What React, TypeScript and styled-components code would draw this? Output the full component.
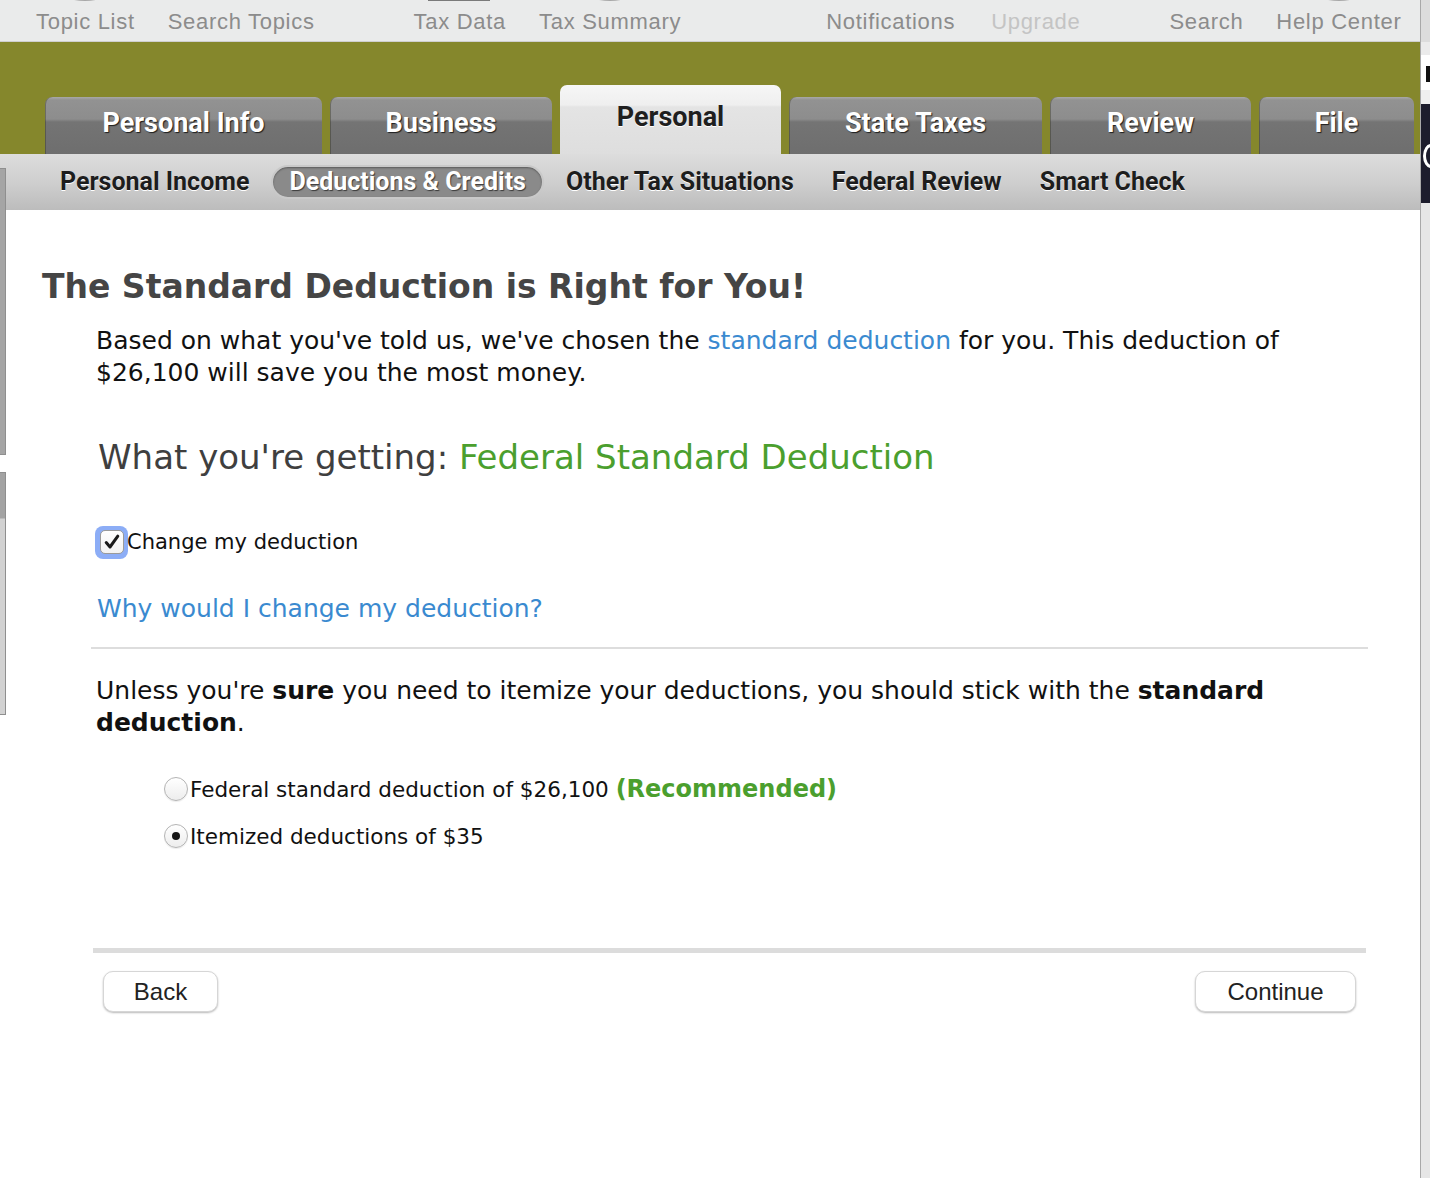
import React from 'react';
import styled, { createGlobalStyle } from 'styled-components';

const GlobalStyle = createGlobalStyle`
	html, body {
		margin: 0;
		padding: 0;
		background: #ffffff;
		overflow: hidden;
	}
	body {
		font-family: 'DejaVu Sans', 'Noto Sans', sans-serif;
		color: #111111;
	}
`;

const topGroups = [
	{ offset: 36, gap: 33, items: [{ label: 'Topic List', arc: true }, { label: 'Search Topics' }] },
	{ offset: 99, gap: 33, items: [{ label: 'Tax Data', marker: true }, { label: 'Tax Summary', arc: true }] },
	{ offset: 145, gap: 36, items: [{ label: 'Notifications' }, { label: 'Upgrade', muted: true }] },
	{ offset: 89, gap: 33, items: [{ label: 'Search' }, { label: 'Help Center', arc: true }] },
];

const mainTabs = [
	{ label: 'Personal Info', width: 277 },
	{ label: 'Business', width: 222 },
	{ label: 'Personal', width: 221, active: true },
	{ label: 'State Taxes', width: 253 },
	{ label: 'Review', width: 201 },
	{ label: 'File', width: 155 },
];

const subTabs = [
	{ label: 'Personal Income' },
	{ label: 'Deductions & Credits', active: true },
	{ label: 'Other Tax Situations' },
	{ label: 'Federal Review' },
	{ label: 'Smart Check' },
];

export default function App() {
	return (
		<>
			<GlobalStyle />
			<Window>
				<Main>
					<TopBar>
						{topGroups.map((group, i) => (
							<TopGroup key={i} $offset={group.offset} $gap={group.gap}>
								{group.items.map((item) => (
									<TopItem key={item.label} $muted={item.muted}>
										{item.marker && <TopMarker />}
										{item.arc && <TopArc />}
										{item.label}
									</TopItem>
								))}
							</TopGroup>
						))}
					</TopBar>

					<TabBand>
						{mainTabs.map((tab) => (
							<Tab key={tab.label} $width={tab.width} $active={tab.active}>
								{tab.label}
							</Tab>
						))}
					</TabBand>

					<SubNav>
						{subTabs.map((tab) => (
							<SubTab key={tab.label} $active={tab.active}>
								{tab.label}
							</SubTab>
						))}
					</SubNav>

					<SideEdge $top={168} $height={287} />
					<SideEdge $top={472} $height={243} $light />

					<Content>
						<Heading>The Standard Deduction is Right for You!</Heading>
						<Intro>
							<span>Based on what you've told us, we've chosen the </span>
							<Link>standard deduction</Link>
							<span> for you. This deduction of</span>{' '}
							<span>$26,100 will save you the most money.</span>
						</Intro>

						<Getting>
							What you're getting: <Green>Federal Standard Deduction</Green>
						</Getting>

						<CheckRow>
							<CheckRing>
								<CheckBox>
									<svg width='18' height='18' viewBox='0 0 18 18'>
										<path
											d='M3.2 9.6 L7 14 L14.8 3.2'
											fill='none'
											stroke='#1a1a1a'
											strokeWidth='3'
											strokeLinecap='round'
											strokeLinejoin='round'
										/>
									</svg>
								</CheckBox>
							</CheckRing>
							<CheckLabel>Change my deduction</CheckLabel>
						</CheckRow>

						<WhyLink>Why would I change my deduction?</WhyLink>

						<Divider />

						<Advice>
							Unless you're <Strong>sure</Strong> you need to itemize your
							deductions, you should stick with the <Strong>standard</Strong>{' '}
							<Strong>deduction</Strong>.
						</Advice>

						<Options>
							<Option>
								<Radio />
								<OptionLabel>
									Federal standard deduction of $26,100{' '}
									<Recommended>(Recommended)</Recommended>
								</OptionLabel>
							</Option>
							<Option>
								<Radio $checked />
								<OptionLabel>Itemized deductions of $35</OptionLabel>
							</Option>
						</Options>

						<FooterRule />
						<ButtonRow>
							<NavButton $width={115}>Back</NavButton>
							<NavButton $width={161}>Continue</NavButton>
						</ButtonRow>
					</Content>
				</Main>

				<RightStrip>
					<StripBlock $height={42} $color='#dcdcdc' />
					<StripBlock $height={13} $color='#ebebeb' />
					<StripBlock $height={35} $color='#ffffff'>
						<StripGlyph />
					</StripBlock>
					<StripBlock $height={14} $color='#efefef' />
					<StripBlock $height={99} $color='#1c1c2c'>
						<StripArc />
					</StripBlock>
					<StripBlock $height={975} $color='#e6e6e6' />
				</RightStrip>
			</Window>
		</>
	);
}

const Window = styled.div`
	display: flex;
	width: 1430px;
	height: 1178px;
	overflow: hidden;
`;

const Main = styled.div`
	position: relative;
	width: 1420px;
	display: flex;
	flex-direction: column;
	background: #ffffff;
`;

const TopBar = styled.div`
	height: 42px;
	box-sizing: border-box;
	padding-top: 2px;
	display: flex;
	align-items: center;
	background: #eaebeb;
	border-bottom: 1px solid #cfcfcf;
	font-family: 'Liberation Sans', Arial, sans-serif;
	font-size: 22px;
	letter-spacing: 0.7px;
	overflow: hidden;
`;

const TopGroup = styled.div<{ $offset: number; $gap: number }>`
	display: flex;
	gap: ${({ $gap }) => $gap}px;
	margin-left: ${({ $offset }) => $offset}px;
`;

const TopItem = styled.span<{ $muted?: boolean }>`
	position: relative;
	color: ${({ $muted }) => ($muted ? '#c4c4c4' : '#8c8c8c')};
	white-space: nowrap;
`;

const TopMarker = styled.span`
	position: absolute;
	left: 14px;
	top: -11px;
	width: 62px;
	height: 3px;
	background: #7a7a7a;
`;

const TopArc = styled.span`
	position: absolute;
	left: 50%;
	top: -32px;
	width: 56px;
	height: 24px;
	margin-left: -28px;
	box-sizing: border-box;
	border-radius: 50%;
	border: 2px solid #a8a8a8;
	background: #dcdcdc;
`;

const TabBand = styled.div`
	height: 112px;
	box-sizing: border-box;
	display: flex;
	align-items: flex-end;
	gap: 8px;
	padding-left: 45px;
	background: #85872c;
`;

const Tab = styled.div<{ $width: number; $active?: boolean }>`
	width: ${({ $width }) => $width}px;
	height: ${({ $active }) => ($active ? 69 : 57)}px;
	box-sizing: border-box;
	padding-top: ${({ $active }) => ($active ? 18 : 12)}px;
	border-radius: 7px 7px 0 0;
	text-align: center;
	font-family: 'Liberation Sans Narrow', 'Roboto', sans-serif;
	font-weight: 700;
	font-size: 27px;
	line-height: 28px;
	color: ${({ $active }) => ($active ? '#1f1f1f' : '#ffffff')};
	text-shadow: ${({ $active }) =>
		$active ? '0 1px 0 #ffffff' : '1px 1px 1px #1d1d1d'};
	background: ${({ $active }) =>
		$active
			? 'linear-gradient(to bottom, #f6f6f6 0px, #efefef 20px, #e4e4e4 22px, #dedede 100%)'
			: 'linear-gradient(to bottom, #a9a9a9 0px, #929292 3px, #8d8d8d 22px, #747474 25px, #6e6e6e 100%)'};
	box-shadow: ${({ $active }) =>
		$active ? 'none' : 'inset 1px 0 0 rgba(40, 40, 20, 0.35)'};
`;

const SubNav = styled.div`
	height: 56px;
	box-sizing: border-box;
	display: flex;
	align-items: center;
	gap: 6px;
	padding-left: 44px;
	background: linear-gradient(to bottom, #dddddd 0%, #cfcfcf 50%, #bcbcbc 100%);
`;

const SubTab = styled.div<{ $active?: boolean }>`
	height: 34px;
	box-sizing: border-box;
	padding: 0 16px;
	border-radius: 17px;
	font-family: 'Liberation Sans Narrow', 'Roboto', sans-serif;
	font-weight: 700;
	font-size: 25px;
	line-height: ${({ $active }) => ($active ? 30 : 34)}px;
	white-space: nowrap;
	color: ${({ $active }) => ($active ? '#ffffff' : '#1d1d1d')};
	text-shadow: ${({ $active }) =>
		$active ? '1px 1px 1px #3a3a3a' : '0 1px 0 #ffffff'};
	background: ${({ $active }) => ($active ? '#8a8a8a' : 'transparent')};
	border: ${({ $active }) => ($active ? '2px solid #c9c9c9' : 'none')};
	box-shadow: ${({ $active }) =>
		$active ? 'inset 0 1px 2px rgba(0, 0, 0, 0.35)' : 'none'};
`;

const SideEdge = styled.div<{ $top: number; $height: number; $light?: boolean }>`
	position: absolute;
	left: 0;
	top: ${({ $top }) => $top}px;
	width: 6px;
	height: ${({ $height }) => $height}px;
	box-sizing: border-box;
	border: 1px solid #8f8f8f;
	border-left: none;
	background: ${({ $light }) =>
		$light
			? 'linear-gradient(to bottom, #a3a3a3 0px, #a3a3a3 45px, #d2d2d2 46px, #d2d2d2 100%)'
			: '#a5a5a5'};
`;

const Content = styled.div`
	display: flex;
	flex-direction: column;
	padding: 0 52px 0 42px;
`;

const Heading = styled.h1`
	margin: 57px 0 0;
	font-size: 33px;
	line-height: 40px;
	font-weight: 700;
	color: #454545;
	white-space: nowrap;
`;

const Intro = styled.p`
	margin: 18px 0 0 54px;
	font-size: 25px;
	line-height: 32px;
	color: #111111;
`;

const Link = styled.span`
	color: #3a8ad0;
`;

const Strong = styled.strong`
	font-weight: 700;
`;

const Getting = styled.div`
	margin: 46px 0 0 56px;
	font-size: 34px;
	line-height: 44px;
	color: #3f3f3f;
`;

const Green = styled.span`
	color: #4b9f2e;
`;

const CheckRow = styled.div`
	margin: 46px 0 0 53px;
	display: flex;
	align-items: center;
	height: 34px;
`;

const CheckRing = styled.span`
	width: 33px;
	height: 33px;
	box-sizing: border-box;
	border-radius: 8px;
	background: #8cadf6;
	display: flex;
	align-items: center;
	justify-content: center;
`;

const CheckBox = styled.span`
	width: 24px;
	height: 24px;
	box-sizing: border-box;
	border-radius: 5px;
	border: 1px solid #9a9a9a;
	background: linear-gradient(to bottom, #ffffff, #f2f2f2);
	display: flex;
	align-items: center;
	justify-content: center;
`;

const CheckLabel = styled.span`
	margin-left: -1px;
	font-size: 21px;
	color: #111111;
`;

const WhyLink = styled.div`
	margin: 34px 0 0 55px;
	font-size: 25px;
	line-height: 32px;
	color: #3a8ad0;
`;

const Divider = styled.hr`
	margin: 22px 0 0 49px;
	width: 1277px;
	height: 2px;
	border: none;
	background: #dddddd;
`;

const Advice = styled.p`
	margin: 26px 0 0 54px;
	font-size: 25px;
	line-height: 32px;
	color: #111111;
`;

const Options = styled.div`
	margin: 35px 0 0 122px;
	display: flex;
	flex-direction: column;
	gap: 17px;
`;

const Option = styled.div`
	display: flex;
	align-items: center;
	height: 30px;
`;

const Radio = styled.span<{ $checked?: boolean }>`
	position: relative;
	width: 24px;
	height: 24px;
	box-sizing: border-box;
	border-radius: 50%;
	border: 1px solid #b4b4b4;
	background: linear-gradient(to bottom, #ffffff, #ededed);
	box-shadow: 0 1px 1px rgba(0, 0, 0, 0.08);
	display: flex;
	align-items: center;
	justify-content: center;

	&::after {
		content: '';
		display: ${({ $checked }) => ($checked ? 'block' : 'none')};
		width: 8px;
		height: 8px;
		border-radius: 50%;
		background: #151515;
	}
`;

const OptionLabel = styled.span`
	margin-left: 2px;
	font-size: 21.5px;
	color: #111111;
	white-space: nowrap;
`;

const Recommended = styled.b`
	font-size: 24px;
	color: #4b9f2e;
`;

const FooterRule = styled.div`
	margin: 97px 0 0 51px;
	width: 1273px;
	height: 5px;
	background: #dcdcdc;
`;

const ButtonRow = styled.div`
	margin: 18px 0 0 61px;
	width: 1253px;
	display: flex;
	justify-content: space-between;
`;

const NavButton = styled.button<{ $width: number }>`
	width: ${({ $width }) => $width}px;
	height: 41px;
	border: 1px solid #d6d6d6;
	border-radius: 10px;
	background: #ffffff;
	box-shadow: 0 1px 2px rgba(0, 0, 0, 0.28);
	font-family: 'Liberation Sans', Arial, sans-serif;
	font-size: 24px;
	color: #222222;
	padding: 0;
`;

const RightStrip = styled.div`
	width: 10px;
	box-sizing: border-box;
	border-left: 1px solid #a8a8a8;
	display: flex;
	flex-direction: column;
`;

const StripBlock = styled.div<{ $height: number; $color: string }>`
	position: relative;
	height: ${({ $height }) => $height}px;
	flex-shrink: 0;
	background: ${({ $color }) => $color};
	overflow: hidden;
`;

const StripGlyph = styled.span`
	position: absolute;
	left: 5px;
	top: 11px;
	width: 4px;
	height: 16px;
	background: #111111;
`;

const StripArc = styled.span`
	position: absolute;
	left: 2px;
	top: 40px;
	width: 16px;
	height: 24px;
	box-sizing: border-box;
	border: 3px solid #ffffff;
	border-radius: 50%;
`;
